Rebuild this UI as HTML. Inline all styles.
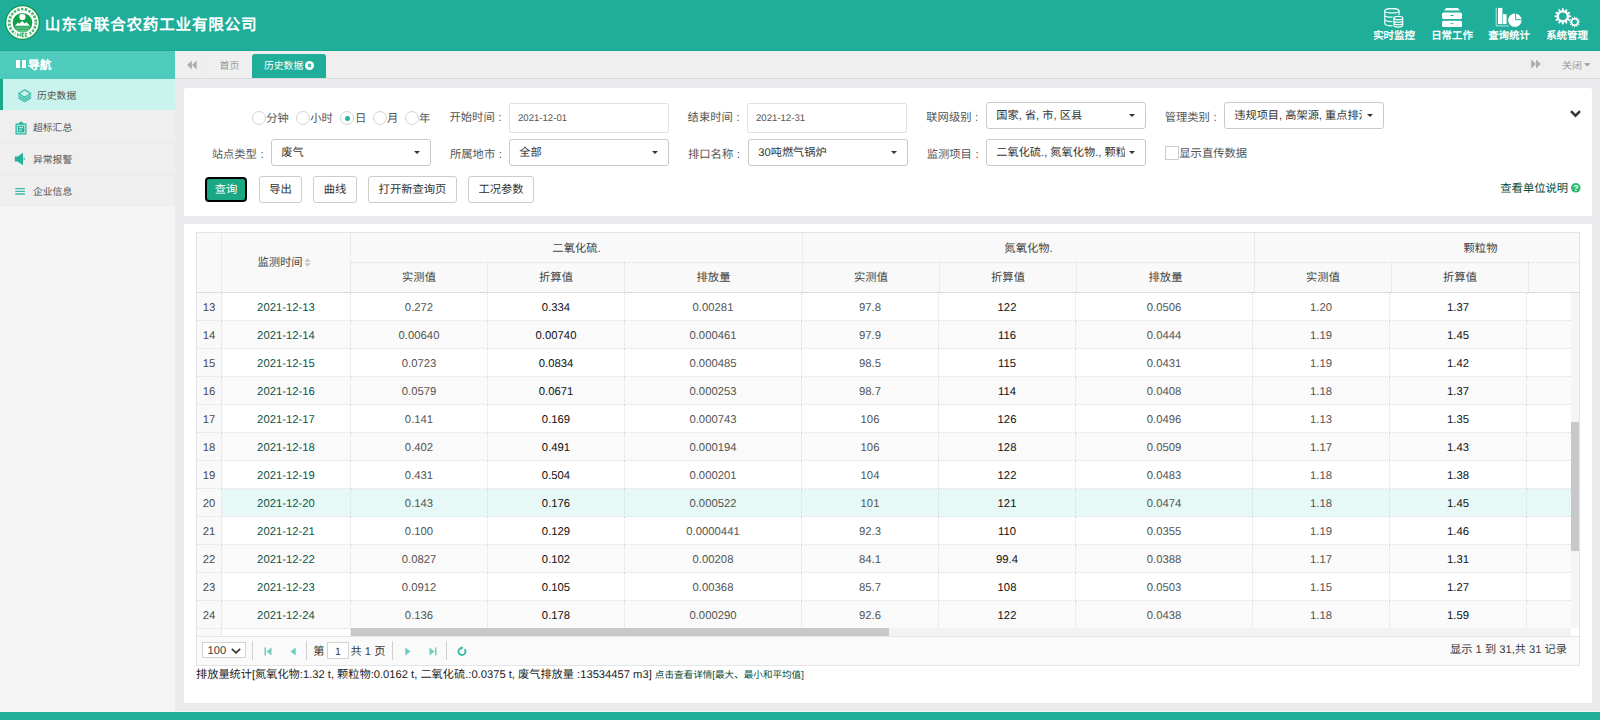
<!DOCTYPE html>
<html lang="zh-CN">
<head>
<meta charset="utf-8">
<title>历史数据</title>
<style>
*{box-sizing:border-box;margin:0;padding:0}
html,body{width:1600px;height:720px;overflow:hidden}
body{font-family:"Liberation Sans",sans-serif;font-size:11px;color:#555;background:#ebebed;position:relative;text-rendering:geometricPrecision}
.abs{position:absolute}
svg{display:block}
/* header */
#hdr{left:0;top:0;width:1600px;height:51px;background:#1fae9a;border-bottom:1px solid #1ca592}
#logo{left:4.5px;top:5px}
#title{left:44.8px;top:14.4px;font-size:15.6px;letter-spacing:.75px;font-weight:bold;color:#fff;line-height:24px;white-space:nowrap}
.tm{top:0;width:58px;height:50px;color:#fff;text-align:center;font-size:10.45px;font-weight:bold}
.tm span{position:absolute;left:0;right:0;top:30px;line-height:14px;white-space:nowrap}
.tm svg{position:absolute;top:7px;left:17px}
/* sidebar */
#side{left:0;top:51px;width:175px;height:661px;background:#f5f5f5}
#navh{left:0;top:0;width:175px;height:28px;background:#4ecbbc;color:#fff;font-weight:bold;font-size:11.7px;line-height:29px;padding-left:28px;text-shadow:0 0 1px rgba(255,255,255,.5)}
#navh i{position:absolute;left:16px;top:9px;width:4.2px;height:8.2px;background:#fff}
#navh i+i{left:21.5px}
.ni{left:0;width:175px;height:32px;line-height:36px;color:#555;font-size:9.8px;border-bottom:1px solid #e8e8e8;background:#efefef;padding-left:33px;white-space:nowrap}
.ni svg{position:absolute;left:14px;top:9.4px}
.ni.act{background:#c9f3ec;border-left:3px solid #1aa98a;border-bottom:0;height:31px;padding-left:34px;line-height:35px}
.ni.act svg{left:14.9px;top:9.6px}
/* tabs */
#tabs{left:175px;top:51px;width:1425px;height:28px;background:#efefef;border-bottom:1px solid #dcdcde}
#tabs .sep{position:absolute;left:32px;top:0;width:1px;height:27px;background:#ececec}
#tabs .t{position:absolute;font-size:10px;color:#999;line-height:14px;white-space:nowrap}
#tabact{position:absolute;left:77px;top:3px;width:74px;height:24px;background:#1fae9a;border-radius:3px 3px 0 0}
/* panels */
.panel{background:#fff}
#p1{left:184px;top:88px;width:1408px;height:128px;border-radius:2.5px 2.5px 0 0}
#p2{left:184px;top:224px;width:1408px;height:479px}
#foot{left:0;top:711px;width:1600px;height:9px;background:#1fae9a;border-top:1px solid #f4f4f4}
/* form */
.lb{position:absolute;font-size:11.3px;color:#555;line-height:14px;white-space:nowrap}
.rd{position:absolute;width:14px;height:14px;border:1px solid #d4d4d4;border-radius:50%;background:#fff}
.rd.on:after{content:"";position:absolute;left:3.5px;top:3.5px;width:5px;height:5px;border-radius:50%;background:#1fb5ad}
.inp{position:absolute;height:30px;border:1px solid #e2e2e4;border-radius:2px;background:#fff;font-size:9.6px;color:#555;line-height:30px;padding-left:8px;white-space:nowrap}
.sel{position:absolute;height:27px;border:1px solid #c9c9c9;border-radius:3px;background:#fff;font-size:11.2px;color:#333;line-height:27.5px;padding-left:9.3px;white-space:nowrap;overflow:hidden}
.sel:after{content:"";position:absolute;right:10px;top:11px;border:3.5px solid transparent;border-top:3.5px solid #333;border-bottom:0}
.sel b{display:block;font-weight:normal;overflow:hidden}
.btn{position:absolute;top:88px;height:27px;border:1px solid #ccc;border-radius:3px;background:#fff;font-size:11.3px;color:#333;line-height:27px;text-align:center;white-space:nowrap}
.btn.pri{top:89px;height:25px;border:2px solid #000;border-radius:4px;background:#1aa783;color:#fff;line-height:23px}
.cb{position:absolute;width:14px;height:14px;border:1px solid #ccc;background:#fff}
/* grid */
#grid{left:196px;top:232px;width:1384px;height:434px;border:1px solid #e5e5e5;background:#fff;overflow:hidden}
#gh{left:0;top:0;width:1382px;height:60px;background:#f9f9f9;border-bottom:1px solid #ddd;overflow:hidden}
.hc{position:absolute;font-size:11.3px;color:#444;text-align:center;line-height:14px;white-space:nowrap;border-right:1px dotted #ddd}
.hline{position:absolute;height:0;border-top:1px dotted #ddd}
table{border-collapse:separate;border-spacing:0;table-layout:fixed}
td{height:28px;border-right:1px dotted #ddd;border-bottom:1px dotted #ddd;text-align:center;font-size:11.3px;color:#555;padding:2px 0 0 0;white-space:nowrap;overflow:hidden;line-height:14px;padding-bottom:0px}
tr.alt td{background:#fafafa}
tr.hl td{background:#e6f9f6}
td.rn{background:#f9f9f9 !important;color:#4a4a4a;width:25px}
td.dt{color:#0d5548;width:129px}
td.c1,td.c4,td.c7{color:#111}
#v1{left:0;top:60px;width:154px;height:343px;overflow:hidden}
#v2{left:154px;top:60px;width:1220px;height:335px;overflow:hidden}
#hs{left:154px;top:395px;width:1220px;height:8px;background:#f3f3f3}
#hs i{position:absolute;left:0;top:0;width:538px;height:8px;background:#c8c8ca}
#vs{left:1374px;top:60px;width:8px;height:335px;background:#f5f5f5}
#vs i{position:absolute;left:0;top:129px;width:8px;height:129px;background:#c8c8ca}
#pg{left:0;top:403px;width:1382px;height:29px;background:#fafafa;border-top:1px solid #e4e4e4}
#pg .ps{position:absolute;top:4px;width:1px;height:19px;background:#d0d0d0}
#pg .tx{position:absolute;font-size:11.2px;color:#3a3a3a;line-height:14px;white-space:nowrap}
#pg .bx{position:absolute;border:1px solid #d3d3d3;background:#fff}
#pg svg{position:absolute}
#stat{left:196px;top:667.7px;font-size:11.2px;color:#1c1c1c;line-height:14px;white-space:nowrap}
#stat a{font-size:9.58px;color:#0a4f43;text-decoration:none}
.co{margin-left:3.6px}
td.c0,td.c1,td.c3,td.c4,td.c6,td.c7{width:137px}
td.c2,td.c5{width:177px}
td.c8{width:178px}

</style>
</head>
<body>
<div id="hdr" class="abs">
  <svg id="logo" class="abs" width="35" height="35" viewBox="0 0 35 35">
    <circle cx="17.5" cy="17.5" r="17.45" fill="#0f9747"/>
    <circle cx="17.5" cy="17.5" r="16.2" fill="#fff"/>
    <circle cx="17.5" cy="17.5" r="13.3" fill="none" stroke="#1da352" stroke-width="2.7" stroke-dasharray="2.4 1.4" opacity=".8"/>
    <circle cx="17.5" cy="17.5" r="11.5" fill="#fff"/>
    <path d="M24.550 28.780A13.300 13.300 0 0 1 10.450 28.780" fill="none" stroke="#fff" stroke-width="3.400"/>
    <circle cx="17.5" cy="17.700" r="9.800" fill="#12a04b"/>
    <circle cx="17.400" cy="11.900" r="3.100" fill="#fff"/>
    <path d="M10 20.800L12.800 17.400 14.200 18.700 17.300 16 19.700 18.500 21.500 17.200 25 20.800z" fill="#fff"/>
    <path d="M9.700 21.600H25.300L23.900 24.600 20.500 26.900H14.500L11.100 24.600z" fill="#5fc283"/>
    <path d="M10.500 22.900H24.500M12 24.500H23" stroke="#12a04b" stroke-width=".5"/>
    <path transform="translate(-.6,-.6)" d="M13.300 32.400V29l1.550 2.300 1.550-2.300v3.400M19.700 29h-2v3.400h2M17.700 30.700h1.600M22.900 29h-2v3.400h2M20.900 30.700h1.600" fill="none" stroke="#12a04b" stroke-width=".85"/>
  </svg>
  <div id="title" class="abs">山东省联合农药工业有限公司</div>

  <div class="tm abs" style="left:1365px">
    <svg width="20" height="20" viewBox="0 0 20 20" fill="none" stroke="#f1fbf9" stroke-width="1.250" style="left:18.500px;top:7.500px">
      <ellipse cx="7.900" cy="2.700" rx="7.100" ry="2.200"/>
      <path d="M.8 2.700V15.600c0 1.200 3.200 2.200 7.100 2.200s7.100-1 7.100-2.200V2.700M.8 7c0 1.200 3.200 2.200 7.100 2.200s7.100-1 7.100-2.200M.8 11.300c0 1.200 3.200 2.200 7.100 2.200s7.100-1 7.100-2.200"/>
      <path d="M9.900 10V17.300c0 .95 1.970 1.700 4.400 1.700s4.400-.75 4.400-1.700V10c0-.95-1.970-1.700-4.400-1.700s-4.400.75-4.400 1.700z" fill="#1fae9a" stroke="#1fae9a" stroke-width="3"/>
      <ellipse cx="14.300" cy="10" rx="4.400" ry="1.700"/>
      <path d="M9.900 10V17.300c0 .95 1.970 1.700 4.400 1.700s4.400-.75 4.400-1.700V10M9.900 12.500c0 .95 1.970 1.700 4.400 1.700s4.400-.75 4.400-1.700M9.900 14.900c0 .95 1.970 1.700 4.400 1.700s4.400-.75 4.400-1.700"/>
    </svg>
    <span>实时监控</span></div>
  <div class="tm abs" style="left:1423px">
    <svg width="20" height="20" viewBox="0 0 20 20" fill="#fff" style="left:19.200px">
      <path d="M4.2 1h11.600l2.200 2.600H2z"/>
      <path d="M1.500 5.500h17a1.500 1.500 0 0 1 1.500 1.500v3.400a1.500 1.500 0 0 1-1.500 1.500h-17a1.500 1.500 0 0 1-1.500-1.500V7a1.500 1.500 0 0 1 1.500-1.500zM8.500 8v.9h3V8z" fill-rule="evenodd"/>
      <path d="M1.500 13.700h17a1.500 1.500 0 0 1 1.500 1.500v3.400a1.500 1.500 0 0 1-1.500 1.500h-17a1.500 1.500 0 0 1-1.500-1.500v-3.400a1.500 1.500 0 0 1 1.500-1.500zM8.500 16.200v.9h3v-.9z" fill-rule="evenodd"/>
    </svg>
    <span>日常工作</span></div>
  <div class="tm abs" style="left:1480px">
    <svg width="27" height="20" viewBox="0 0 27 20" style="left:15px">
      <path d="M1.200 .9V18.900H14" fill="none" stroke="#dff4f0" stroke-width=".8"/>
      <rect x="3" y=".9" width="4.400" height="16.200" fill="#fff"/>
      <rect x="7.900" y="7.200" width="3.700" height="9.900" fill="#fff"/>
      <circle cx="19.900" cy="13.300" r="6.700" fill="#fff"/>
      <path d="M20.600 5.500V12.700H27" fill="none" stroke="#1fae9a" stroke-width="1"/>
    </svg>
    <span>查询统计</span></div>
  <div class="tm abs" style="left:1538px">
    <svg width="27" height="21" viewBox="0 0 27 21" style="left:16px" fill="#fff" fill-rule="evenodd"><path d="M7.68 3.46L8.07 1.18L9.53 1.18L9.92 3.46L10.77 3.68L12.25 1.91L13.52 2.64L12.72 4.81L13.34 5.43L15.51 4.63L16.24 5.90L14.47 7.38L14.69 8.23L16.97 8.62L16.97 10.08L14.69 10.47L14.47 11.32L16.24 12.80L15.51 14.07L13.34 13.27L12.72 13.89L13.52 16.06L12.25 16.79L10.77 15.02L9.92 15.24L9.53 17.52L8.07 17.52L7.68 15.24L6.83 15.02L5.35 16.79L4.08 16.06L4.88 13.89L4.26 13.27L2.09 14.07L1.36 12.80L3.13 11.32L2.91 10.47L0.63 10.08L0.63 8.62L2.91 8.23L3.13 7.38L1.36 5.90L2.09 4.63L4.26 5.43L4.88 4.81L4.08 2.64L5.35 1.91L6.83 3.68zM4.95 9.35a3.85 3.85 0 1 0 7.70 0a3.85 3.85 0 1 0 -7.70 0z"/><path d="M19.92 11.12L20.23 9.67L21.07 9.67L21.38 11.12L21.93 11.27L22.93 10.17L23.65 10.58L23.20 12.00L23.60 12.40L25.02 11.95L25.43 12.67L24.33 13.67L24.48 14.22L25.93 14.53L25.93 15.37L24.48 15.68L24.33 16.23L25.43 17.23L25.02 17.95L23.60 17.50L23.20 17.90L23.65 19.32L22.93 19.73L21.93 18.63L21.38 18.78L21.07 20.23L20.23 20.23L19.92 18.78L19.37 18.63L18.37 19.73L17.65 19.32L18.10 17.90L17.70 17.50L16.28 17.95L15.87 17.23L16.97 16.23L16.82 15.68L15.37 15.37L15.37 14.53L16.82 14.22L16.97 13.67L15.87 12.67L16.28 11.95L17.70 12.40L18.10 12.00L17.65 10.58L18.37 10.17L19.37 11.27zM18.20 14.95a2.45 2.45 0 1 0 4.90 0a2.45 2.45 0 1 0 -4.90 0z"/></svg>
    <span>系统管理</span></div>
</div>

<div id="side" class="abs">
  <div id="navh" class="abs"><i></i><i></i>导航</div>
  <div class="ni act abs" style="top:28px">
    <svg width="14" height="14" viewBox="0 0 14 14" fill="none" stroke="#38bba6" stroke-width="1.250" stroke-linejoin="round" stroke-linecap="round"><path d="M6.700 .8L12.700 4.600 6.700 8.400.7 4.600z"/><path d="M.7 6.800L6.700 10.600 12.700 6.800M.7 8.900L6.700 12.700 12.700 8.900"/></svg>历史数据</div>
  <div class="ni abs" style="top:59px;height:33px;padding-top:1px">
    <svg style="top:10.600px;left:14.500px" width="12" height="14" viewBox="0 0 12 14"><path d="M.5 2.500h3.200V1.500h1.300V.7h2v.8h1.300v1h3.200v11H.5z" fill="#25b39e"/><rect x="2.200" y="4.300" width="7.600" height="7.500" fill="none" stroke="#dff5f1" stroke-width=".9"/><path d="M4 6.700h4M4 9.200h2.800" stroke="#e9f8f5" stroke-width="1"/></svg>超标汇总</div>
  <div class="ni abs" style="top:92px">
    <svg width="12" height="14" viewBox="0 0 12 14"><path d="M.8 4.600h2.700L9 .8v12.400L3.500 9.400H.8z" fill="#25b39e"/><path d="M9.600 5.300a1.800 1.800 0 0 1 0 3.400z" fill="#25b39e"/></svg>异常报警</div>
  <div class="ni abs" style="top:124px;border-bottom-color:#efefef">
    <svg width="12" height="14" viewBox="0 0 12 14"><path d="M1.300 4.600h9.600M1.300 7.300h9.600M1.300 10h9.600" stroke="#3dbba7" stroke-width="1.300"/></svg>企业信息</div>
</div>

<div id="tabs" class="abs">
  <svg class="abs" style="left:12px;top:9px" width="10" height="10" viewBox="0 0 10 10" fill="#aaa"><path d="M4.800 .5v9L.3 5zM9.600 .5v9L5.100 5z"/></svg>
  <div class="sep"></div>
  <div class="t" style="left:44.500px;top:8.500px">首页</div>
  <div id="tabact"><div class="t" style="left:12px;top:5.500px;color:#fff;font-size:9.8px">历史数据</div>
    <svg class="abs" style="left:53px;top:7px" width="9" height="9" viewBox="0 0 9 9"><circle cx="4.500" cy="4.500" r="4.500" fill="#fff"/><path d="M3 3l3 3M6 3l-3 3" stroke="#1fae9a" stroke-width="1.300"/></svg>
  </div>
  <svg class="abs" style="left:1356px;top:8px" width="10" height="10" viewBox="0 0 10 10" fill="#aaa"><path d="M.3 .5v9L4.800 5zM5.100 .5v9L9.600 5z"/></svg>
  <div class="t" style="left:1387px;top:8.700px">关闭</div>
  <svg class="abs" style="left:1408.500px;top:12px" width="7" height="4" viewBox="0 0 7 4" fill="#999"><path d="M0 .3h6.600L3.300 3.300z"/></svg>
</div>

<div id="p1" class="panel abs">
  <i class="rd" style="left:68px;top:23px"></i><div class="lb" style="left:82.300px;top:24px">分钟</div>
  <i class="rd" style="left:112px;top:23px"></i><div class="lb" style="left:126.200px;top:24px">小时</div>
  <i class="rd on" style="left:156px;top:23px"></i><div class="lb" style="left:171px;top:24px">日</div>
  <i class="rd" style="left:189px;top:23px"></i><div class="lb" style="left:203px;top:24px">月</div>
  <i class="rd" style="left:221px;top:23px"></i><div class="lb" style="left:235px;top:24px">年</div>

  <div class="lb" style="left:265.500px;top:23px">开始时间<span class="co">:</span></div>
  <div class="inp" style="left:125px;top:15px;width:160px;left:325px">2021-12-01</div>
  <div class="lb" style="left:503.600px;top:23px">结束时间<span class="co">:</span></div>
  <div class="inp" style="left:563px;top:15px;width:160px">2021-12-31</div>
  <div class="lb" style="left:742.300px;top:23px">联网级别<span class="co">:</span></div>
  <div class="sel" style="left:802px;top:14px;width:160px">国家, 省, 市, 区县</div>
  <div class="lb" style="left:980.700px;top:23px">管理类别<span class="co">:</span></div>
  <div class="sel" style="left:1040px;top:14px;width:160px"><b style="width:128px">违规项目, 高架源, 重点排污单位</b></div>
  <svg class="abs" style="left:1385.500px;top:22px" width="11" height="8" viewBox="0 0 11 8" fill="none" stroke="#333" stroke-width="2.400"><path d="M1 1.200L5.500 5.700 10 1.200"/></svg>

  <div class="lb" style="left:27.700px;top:59.500px">站点类型<span class="co">:</span></div>
  <div class="sel" style="left:87px;top:51px;width:160px">废气</div>
  <div class="lb" style="left:266px;top:59.500px">所属地市<span class="co">:</span></div>
  <div class="sel" style="left:325px;top:51px;width:160px">全部</div>
  <div class="lb" style="left:504px;top:59.500px">排口名称<span class="co">:</span></div>
  <div class="sel" style="left:564px;top:51px;width:160px">30吨燃气锅炉</div>
  <div class="lb" style="left:742.700px;top:59.500px">监测项目<span class="co">:</span></div>
  <div class="sel" style="left:802px;top:51px;width:160px"><b style="width:129px">二氧化硫., 氮氧化物., 颗粒物</b></div>
  <i class="cb" style="left:981px;top:58px"></i><div class="lb" style="left:995.300px;top:58.700px">显示直传数据</div>

  <div class="btn pri" style="left:21px;width:42px">查询</div>
  <div class="btn" style="left:75px;width:43px">导出</div>
  <div class="btn" style="left:129px;width:44px">曲线</div>
  <div class="btn" style="left:184px;width:89px">打开新查询页</div>
  <div class="btn" style="left:284px;width:66px">工况参数</div>

  <div class="lb" style="left:1316.300px;top:93.500px;color:#094f42">查看单位说明</div>
  <svg class="abs" style="left:1386.500px;top:95.200px" width="10" height="10" viewBox="0 0 10 10"><circle cx="4.800" cy="4.800" r="4.800" fill="#2cbd72"/><text x="4.800" y="7.900" font-size="8.500" font-weight="bold" fill="#fff" text-anchor="middle" font-family="Liberation Sans,sans-serif">?</text></svg>
</div>

<div id="p2" class="panel abs"></div>
<div id="grid" class="abs">
  <div id="gh" class="abs">
    <div class="hc" style="left:0;top:0;width:25px;height:59px"></div>
    <div class="hc" style="left:25px;top:0;width:129px;height:59px;padding-top:22.500px;padding-right:12px">监测时间<svg style="position:absolute;left:82px;top:25px" width="7" height="9" viewBox="0 0 7 9" fill="#c4c4c4"><path d="M3.500 .3L6.600 3.700H.4zM3.500 8.700L6.600 5.300H.4z"/></svg></div>
    <div class="hc" style="left:154px;top:0;width:452px;height:30px;padding-top:8.500px;border-bottom:1px dotted #ddd">二氧化硫.</div>
    <div class="hc" style="left:606px;top:0;width:452px;height:30px;padding-top:8.500px;border-bottom:1px dotted #ddd">氮氧化物.</div>
    <div class="hc" style="left:1058px;top:0;width:452px;height:30px;padding-top:8.500px;border-bottom:1px dotted #ddd">颗粒物</div>
    <div class="hc" style="left:154px;top:30px;width:137px;height:29px;padding-top:7.800px">实测值</div>
    <div class="hc" style="left:291px;top:30px;width:137px;height:29px;padding-top:7.800px">折算值</div>
    <div class="hc" style="left:428px;top:30px;width:178px;height:29px;padding-top:7.800px">排放量</div>
    <div class="hc" style="left:606px;top:30px;width:137px;height:29px;padding-top:7.800px">实测值</div>
    <div class="hc" style="left:743px;top:30px;width:137px;height:29px;padding-top:7.800px">折算值</div>
    <div class="hc" style="left:880px;top:30px;width:178px;height:29px;padding-top:7.800px">排放量</div>
    <div class="hc" style="left:1058px;top:30px;width:137px;height:29px;padding-top:7.800px">实测值</div>
    <div class="hc" style="left:1195px;top:30px;width:137px;height:29px;padding-top:7.800px">折算值</div>
    <div class="hc" style="left:1332px;top:30px;width:178px;height:29px;padding-top:7.800px">排放量</div>
  </div>
  <div id="v1" class="abs"><table style="width:154px">
<tr class=""><td class="rn">13</td><td class="dt">2021-12-13</td></tr>
<tr class="alt"><td class="rn">14</td><td class="dt">2021-12-14</td></tr>
<tr class=""><td class="rn">15</td><td class="dt">2021-12-15</td></tr>
<tr class="alt"><td class="rn">16</td><td class="dt">2021-12-16</td></tr>
<tr class=""><td class="rn">17</td><td class="dt">2021-12-17</td></tr>
<tr class="alt"><td class="rn">18</td><td class="dt">2021-12-18</td></tr>
<tr class=""><td class="rn">19</td><td class="dt">2021-12-19</td></tr>
<tr class="hl"><td class="rn">20</td><td class="dt">2021-12-20</td></tr>
<tr class=""><td class="rn">21</td><td class="dt">2021-12-21</td></tr>
<tr class="alt"><td class="rn">22</td><td class="dt">2021-12-22</td></tr>
<tr class=""><td class="rn">23</td><td class="dt">2021-12-23</td></tr>
<tr class="alt"><td class="rn">24</td><td class="dt">2021-12-24</td></tr>
<tr class=""><td class="rn">25</td><td class="dt"></td></tr>
  </table></div>
  <div id="v2" class="abs"><table style="width:1354px">
<tr class=""><td class="c0">0.272</td><td class="c1">0.334</td><td class="c2">0.00281</td><td class="c3">97.8</td><td class="c4">122</td><td class="c5">0.0506</td><td class="c6">1.20</td><td class="c7">1.37</td><td class="c8"></td></tr>
<tr class="alt"><td class="c0">0.00640</td><td class="c1">0.00740</td><td class="c2">0.000461</td><td class="c3">97.9</td><td class="c4">116</td><td class="c5">0.0444</td><td class="c6">1.19</td><td class="c7">1.45</td><td class="c8"></td></tr>
<tr class=""><td class="c0">0.0723</td><td class="c1">0.0834</td><td class="c2">0.000485</td><td class="c3">98.5</td><td class="c4">115</td><td class="c5">0.0431</td><td class="c6">1.19</td><td class="c7">1.42</td><td class="c8"></td></tr>
<tr class="alt"><td class="c0">0.0579</td><td class="c1">0.0671</td><td class="c2">0.000253</td><td class="c3">98.7</td><td class="c4">114</td><td class="c5">0.0408</td><td class="c6">1.18</td><td class="c7">1.37</td><td class="c8"></td></tr>
<tr class=""><td class="c0">0.141</td><td class="c1">0.169</td><td class="c2">0.000743</td><td class="c3">106</td><td class="c4">126</td><td class="c5">0.0496</td><td class="c6">1.13</td><td class="c7">1.35</td><td class="c8"></td></tr>
<tr class="alt"><td class="c0">0.402</td><td class="c1">0.491</td><td class="c2">0.000194</td><td class="c3">106</td><td class="c4">128</td><td class="c5">0.0509</td><td class="c6">1.17</td><td class="c7">1.43</td><td class="c8"></td></tr>
<tr class=""><td class="c0">0.431</td><td class="c1">0.504</td><td class="c2">0.000201</td><td class="c3">104</td><td class="c4">122</td><td class="c5">0.0483</td><td class="c6">1.18</td><td class="c7">1.38</td><td class="c8"></td></tr>
<tr class="hl"><td class="c0">0.143</td><td class="c1">0.176</td><td class="c2">0.000522</td><td class="c3">101</td><td class="c4">121</td><td class="c5">0.0474</td><td class="c6">1.18</td><td class="c7">1.45</td><td class="c8"></td></tr>
<tr class=""><td class="c0">0.100</td><td class="c1">0.129</td><td class="c2">0.0000441</td><td class="c3">92.3</td><td class="c4">110</td><td class="c5">0.0355</td><td class="c6">1.19</td><td class="c7">1.46</td><td class="c8"></td></tr>
<tr class="alt"><td class="c0">0.0827</td><td class="c1">0.102</td><td class="c2">0.00208</td><td class="c3">84.1</td><td class="c4">99.4</td><td class="c5">0.0388</td><td class="c6">1.17</td><td class="c7">1.31</td><td class="c8"></td></tr>
<tr class=""><td class="c0">0.0912</td><td class="c1">0.105</td><td class="c2">0.00368</td><td class="c3">85.7</td><td class="c4">108</td><td class="c5">0.0503</td><td class="c6">1.15</td><td class="c7">1.27</td><td class="c8"></td></tr>
<tr class="alt"><td class="c0">0.136</td><td class="c1">0.178</td><td class="c2">0.000290</td><td class="c3">92.6</td><td class="c4">122</td><td class="c5">0.0438</td><td class="c6">1.18</td><td class="c7">1.59</td><td class="c8"></td></tr>
<tr class=""><td class="c0"></td><td class="c1"></td><td class="c2"></td><td class="c3"></td><td class="c4"></td><td class="c5"></td><td class="c6"></td><td class="c7"></td><td class="c8"></td></tr>
  </table></div>
  <div id="hs" class="abs"><i></i></div>
  <div id="vs" class="abs"><i></i></div>
  <div id="pg" class="abs">
    <div class="bx" style="left:5px;top:5px;width:44px;height:16px"></div>
    <div class="tx" style="left:10.500px;top:7.200px">100</div>
    <svg style="left:34px;top:10.500px" width="10" height="6" viewBox="0 0 10 6" fill="none" stroke="#333" stroke-width="1.600"><path d="M.8 .8L5 4.800 9.200 .8"/></svg>
    <div class="ps" style="left:55px"></div>
    <svg style="left:66.500px;top:9.500px" width="8" height="9" viewBox="0 0 8 9" fill="#6dcdbc"><path d="M.5 .5h1.500v8H.5zM7.500 .5v8L2.500 4.500z"/></svg>
    <svg style="left:92.500px;top:9.500px" width="6" height="9" viewBox="0 0 6 9" fill="#6dcdbc"><path d="M5.700 .5v8L.5 4.500z"/></svg>
    <div class="ps" style="left:109px"></div>
    <div class="tx" style="left:116.300px;top:8px">第</div>
    <div class="bx" style="left:130px;top:5px;width:22px;height:17px"></div>
    <div class="tx" style="left:138px;top:8px;font-size:10.500px">1</div>
    <div class="tx" style="left:153.500px;top:8px">共 1 页</div>
    <div class="ps" style="left:195px"></div>
    <svg style="left:207.500px;top:9.500px" width="6" height="9" viewBox="0 0 6 9" fill="#6dcdbc"><path d="M.3 .5v8L5.500 4.500z"/></svg>
    <svg style="left:231.500px;top:9.500px" width="8" height="9" viewBox="0 0 8 9" fill="#6dcdbc"><path d="M6 .5h1.500v8H6zM.5 .5v8L5.500 4.500z"/></svg>
    <div class="ps" style="left:249px"></div>
    <svg style="left:259.500px;top:8.600px" width="10" height="10" viewBox="0 0 10 10" fill="none" stroke="#35b8a3" stroke-width="1.800"><path d="M7.600 3.150A3.500 3.500 0 1 1 3.800 2.210"/><path d="M6.400 1.300L4.400 4 3.100 .4z" fill="#35b8a3" stroke="none"/></svg>
    <div class="tx" style="right:12px;top:6px">显示 1 到 31,共 31 记录</div>
  </div>
</div>
<div id="stat" class="abs">排放量统计[氮氧化物:1.32 t, 颗粒物:0.0162 t, 二氧化硫.:0.0375 t, 废气排放量 :13534457 m3] <a>点击查看详情[最大、最小和平均值]</a></div>
<div id="foot" class="abs"></div>
</body>
</html>
